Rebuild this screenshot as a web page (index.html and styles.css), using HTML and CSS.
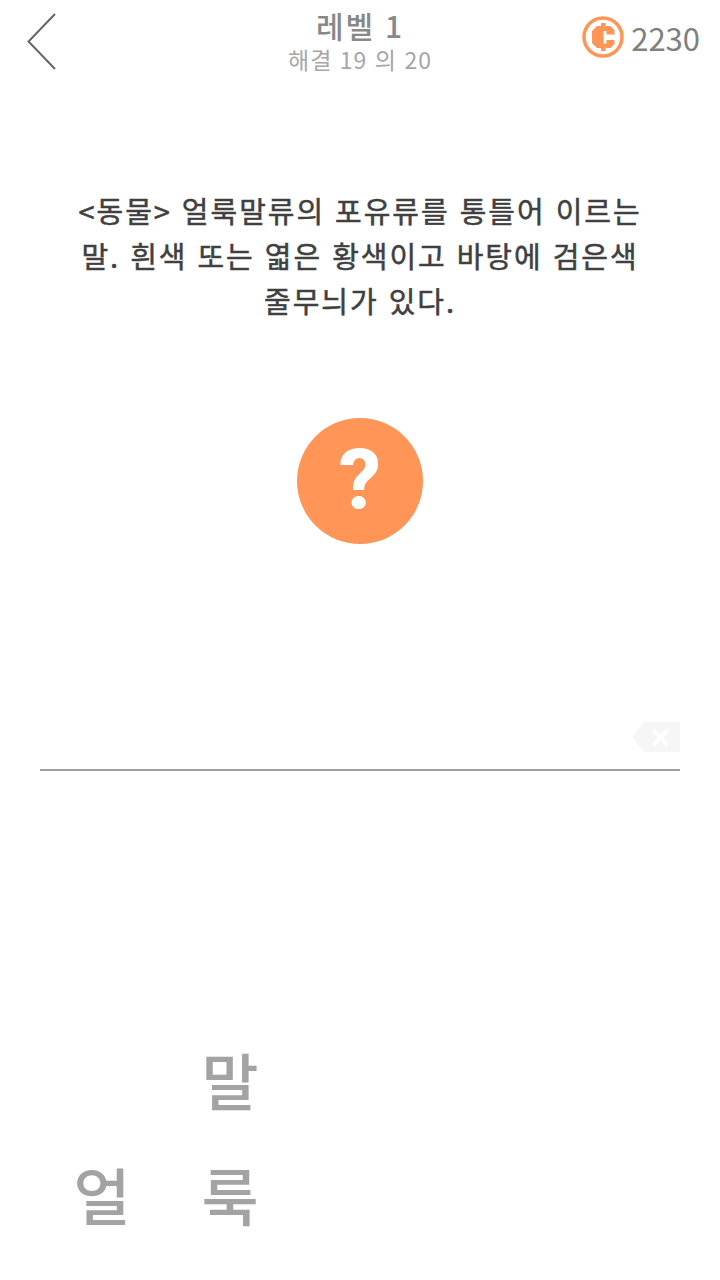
FILE: index.html
```html
<!DOCTYPE html>
<html lang="ko">
<head>
<meta charset="utf-8">
<title>레벨 1</title>
<link rel="stylesheet" href="styles.css">
</head>
<body>
<div class="page">
  <header class="header">
    <svg class="back" width="30" height="58" viewBox="0 0 30 58"><path d="M28 1 L1.500 28.500 L28 56" fill="none" stroke="#666" stroke-width="2"/></svg>
    <div class="titles">
      <div class="level">레벨 1</div>
      <div class="progress">해결 19 의 20</div>
    </div>
    <div class="coins">
      <svg class="coin" width="44" height="44" viewBox="0 0 44 44">
        <circle cx="22" cy="22" r="19" fill="none" stroke="#ff9557" stroke-width="3.500"/>
        <path fill="#ff9557" d="M20 8h4.500v3h5l4 4v5h-1V24h1v5l-4 4h-5v3H20v-3h-4l-5-5V16l5-5h4z"/>
        <path fill="#fff" d="M22.500 16h3v3.500H34V25H25.500v3.500h-3z"/>
      </svg>
      <span class="coin-count">2230</span>
    </div>
  </header>
  <p class="question">&lt;동물&gt; 얼룩말류의 포유류를 통틀어 이르는<br>말. 흰색 또는 엷은 황색이고 바탕에 검은색<br>줄무늬가 있다.</p>
  <div class="hint">?</div>
  <div class="answer">
    <svg class="erase" width="48" height="30" viewBox="0 0 48 30">
      <path fill="#f6f6f6" d="M12 0H48V30H12L0 15Z"/>
      <path stroke="#fff" stroke-width="4" d="M21 8L36 23M36 8L21 23"/>
    </svg>
  </div>
  <div class="tiles">
    <span class="tile"></span><span class="tile">말</span><span class="tile"></span><span class="tile"></span><span class="tile"></span>
    <span class="tile">얼</span><span class="tile">룩</span><span class="tile"></span><span class="tile"></span><span class="tile"></span>
  </div>
</div>
</body>
</html>
```
FILE: styles.css
```css
html, body {
  margin: 0;
  padding: 0;
  background: #fff;
}
.page {
  width: 720px;
  height: 1280px;
  display: flex;
  flex-direction: column;
  align-items: center;
  font-family: "Noto Sans CJK KR", "Noto Sans", sans-serif;
  overflow: hidden;
}
.header {
  width: 100%;
  height: 80px;
  box-sizing: border-box;
  padding: 0 20px;
  display: grid;
  grid-template-columns: 1fr auto 1fr;
  align-items: start;
}
.back {
  margin: 13px 0 0 7px;
}
.titles {
  text-align: center;
}
.level {
  margin-top: 6px;
  font-size: 30px;
  line-height: 38px;
  font-weight: 500;
  color: #888;
  letter-spacing: 1.800px;
}
.progress {
  font-size: 23px;
  line-height: 28px;
  color: #a6a6a6;
  letter-spacing: 1px;
  margin-top: 1px;
}
.coins {
  justify-self: end;
  display: flex;
  align-items: center;
  gap: 6px;
  margin-top: 15px;
}
.coin-count {
  font-size: 31px;
  line-height: 44px;
  color: #808080;
  position: relative;
  top: 1px;
}
.question {
  margin: 108px 0 0;
  font-size: 29px;
  line-height: 45px;
  font-weight: 400;
  color: #404040;
  text-align: center;
  letter-spacing: 1.950px;
  white-space: nowrap;
  -webkit-text-stroke: 0.500px #404040;
}
.hint {
  margin-top: 95px;
  width: 126px;
  height: 126px;
  border-radius: 50%;
  background: #ff9557;
  color: #fff;
  font-family: Roboto, sans-serif;
  font-weight: 800;
  font-size: 84px;
  line-height: 126px;
  text-align: center;
}
.answer {
  margin-top: 178px;
  width: 640px;
  height: 47px;
  border-bottom: 2px solid #a0a0a0;
  display: flex;
  justify-content: flex-end;
  align-items: flex-start;
}
.tiles {
  margin-top: 251px;
  width: 640px;
  display: grid;
  grid-template-columns: repeat(5, 128px);
  grid-auto-rows: 115px;
  transform: translateX(-2px);
}
.tile {
  font-size: 62px;
  line-height: 115px;
  text-align: center;
  color: #a3a3a3;
  font-weight: 500;
  filter: blur(0.5px);
}
```
